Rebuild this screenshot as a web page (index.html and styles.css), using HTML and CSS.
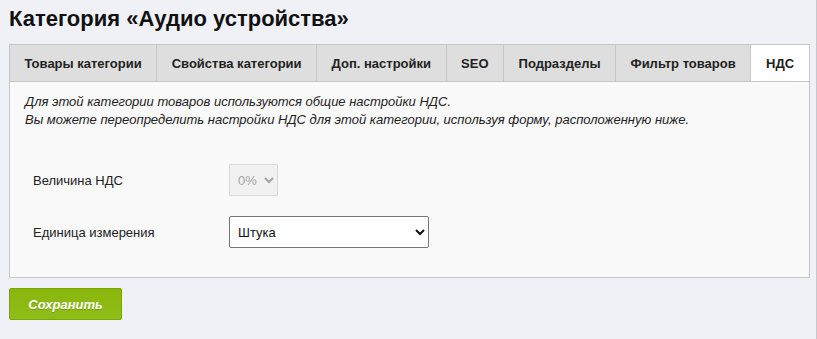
FILE: index.html
```html
<!DOCTYPE html>
<html lang="ru">
<head>
<meta charset="utf-8">
<link rel="stylesheet" href="styles.css">
</head>
<body>
<div class="page">
  <h1 class="title">Категория «Аудио устройства»</h1>
  <div class="panel">
    <div class="tabs">
      <div class="tab">Товары категории</div>
      <div class="tab">Свойства категории</div>
      <div class="tab">Доп. настройки</div>
      <div class="tab">SEO</div>
      <div class="tab">Подразделы</div>
      <div class="tab">Фильтр товаров</div>
      <div class="tab tab-active">НДС</div>
    </div>
    <div class="content">
      <p class="note">Для этой категории товаров используются общие настройки НДС.<br>Вы можете переопределить настройки НДС для этой категории, используя форму, расположенную ниже.</p>
      <div class="form">
        <div class="row">
          <label class="label">Величина НДС</label>
          <select class="select select-small" disabled>
            <option>0%</option>
          </select>
        </div>
        <div class="row">
          <label class="label">Единица измерения</label>
          <select class="select select-wide">
            <option>Штука</option>
          </select>
        </div>
      </div>
    </div>
  </div>
  <button class="save">Сохранить</button>
</div>
</body>
</html>
```
FILE: styles.css
```css
html, body {
  margin: 0;
  padding: 0;
}
body {
  background: #f0f1f6;
  font-family: "Liberation Sans", Arial, sans-serif;
  color: #111;
  min-height: 100vh;
  box-shadow: inset -1px 0 0 #c6c7cc;
}
.page {
  padding: 0 7px 0 9px;
}
.title {
  margin: 0;
  padding-top: 6px;
  font-size: 22px;
  line-height: 25px;
  font-weight: bold;
  color: #111;
  height: 38px;
}
.panel {
  border: 1px solid #c6c6c6;
  background: #f9f9f9;
}
.tabs {
  display: flex;
  background: #dedede;
  border-bottom: 1px solid #c6c6c6;
  height: 36px;
}
.tab {
  display: flex;
  align-items: center;
  flex-shrink: 0;
  white-space: nowrap;
  padding: 0 14.5px;
  border-right: 1px solid #c6c6c6;
  font-size: 13px;
  font-weight: bold;
  color: #222;
}
.tab-active {
  background: #fff;
  flex: 1;
  justify-content: center;
  border-right: none;
  padding: 0;
}
.content {
  padding: 11px 15px 29px;
}
.note {
  margin: 0;
  font-size: 13px;
  line-height: 18px;
  font-style: italic;
  color: #222;
}
.form {
  display: flex;
  flex-direction: column;
  gap: 20px;
  padding: 35px 0 0 8px;
}
.row {
  display: flex;
  align-items: center;
}
.label {
  width: 196px;
  font-size: 13px;
  color: #222;
}
.select {
  height: 32px;
  font-family: "Liberation Sans", Arial, sans-serif;
  font-size: 13px;
  border-radius: 2px;
  padding: 0 4px;
}
.select-small {
  width: 49px;
}
.select-wide {
  width: 200px;
  background: #fff;
  border: 1px solid #767676;
  color: #111;
}
.save {
  margin-top: 10px;
  width: 113px;
  height: 32px;
  background: linear-gradient(#8ab60c, #8fbd18);
  border: 1px solid #78a800;
  border-radius: 2px;
  color: #fff;
  font-family: "Liberation Sans", Arial, sans-serif;
  font-size: 13px;
  font-weight: bold;
  font-style: italic;
  text-shadow: 0 1px 0 rgba(0,0,0,0.2);
  padding: 0;
}
```
